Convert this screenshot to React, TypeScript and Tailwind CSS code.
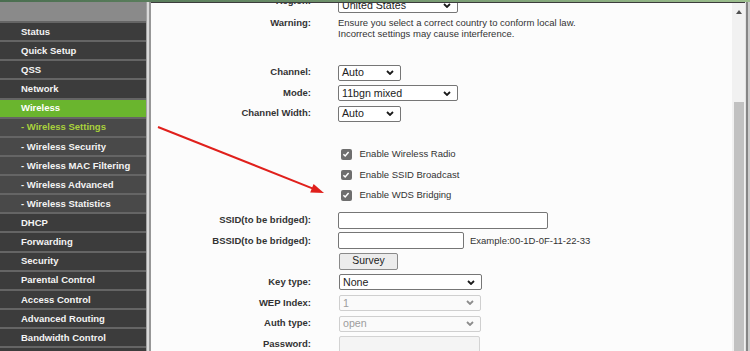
import React from "react";

const font = "font-['Liberation_Sans',Arial,Helvetica,sans-serif]";

function Chevron({ disabled }: { disabled?: boolean }) {
  return (
    <svg width="8" height="5" viewBox="0 0 8 5" className="shrink-0">
      <polyline
        points="1,1 4,4 7,1"
        fill="none"
        stroke={disabled ? "#8c8c8c" : "#1a1a1a"}
        strokeWidth="1.8"
      />
    </svg>
  );
}

function Select({
  value,
  className,
  disabled,
}: {
  value: string;
  className: string;
  disabled?: boolean;
}) {
  return (
    <div
      className={`flex items-center justify-between h-[16px] rounded-[2px] border pl-[3px] pr-[6px] text-[10.67px] leading-none ${
        disabled
          ? "border-[#cfcfcf] bg-[#fafafa] text-[#9d9d9d]"
          : "border-[#767676] bg-white text-[#222]"
      } ${className}`}
    >
      <span>{value}</span>
      <Chevron disabled={disabled} />
    </div>
  );
}

function Input({ className, disabled }: { className: string; disabled?: boolean }) {
  return (
    <div
      className={`h-[17px] rounded-[2px] border ${
        disabled ? "border-[#d3d3d3] bg-[#f4f4f4]" : "border-[#767676] bg-white"
      } ${className}`}
    />
  );
}

function Row({
  label,
  children,
  className = "",
  labelClass = "",
}: {
  label?: string;
  children?: React.ReactNode;
  className?: string;
  labelClass?: string;
}) {
  return (
    <div className={`flex items-center shrink-0 ${className}`}>
      <div className={`w-[160px] shrink-0 text-right font-bold text-[#333] ${labelClass}`}>
        {label}
      </div>
      <div className="ml-[27px] flex items-center">{children}</div>
    </div>
  );
}

function Check({ label }: { label: string }) {
  return (
    <Row className="h-[20.6px]">
      <div className="ml-[3px] flex items-center">
        <span className="flex h-[10.5px] w-[10.5px] items-center justify-center rounded-[2px] bg-[#6e6e6e]">
          <svg width="8" height="8" viewBox="0 0 8 8">
            <polyline
              points="1.4,4.2 3.2,6 6.6,2"
              fill="none"
              stroke="#ffffff"
              strokeWidth="1.5"
            />
          </svg>
        </span>
        <span className="ml-[8px] text-[#333]">{label}</span>
      </div>
    </Row>
  );
}

const nav: { t: string; sub?: boolean; active?: boolean; cur?: boolean }[] = [
  { t: "Status" },
  { t: "Quick Setup" },
  { t: "QSS" },
  { t: "Network" },
  { t: "Wireless", active: true },
  { t: "- Wireless Settings", sub: true, cur: true },
  { t: "- Wireless Security", sub: true },
  { t: "- Wireless MAC Filtering", sub: true },
  { t: "- Wireless Advanced", sub: true },
  { t: "- Wireless Statistics", sub: true },
  { t: "DHCP" },
  { t: "Forwarding" },
  { t: "Security" },
  { t: "Parental Control" },
  { t: "Access Control" },
  { t: "Advanced Routing" },
  { t: "Bandwidth Control" },
  { t: "" },
];

export default function App() {
  return (
    <div
      className={`${font} relative w-[750px] h-[351px] overflow-hidden bg-[#fcfcfc] flex flex-col text-[9.5px]`}
    >
      <div className="h-[2px] shrink-0 bg-gradient-to-r from-[#4a6e50] to-[#9cbf8e]" />
      <div className="flex flex-1 min-h-0">
        {/* Sidebar */}
        <div className="w-[146px] shrink-0 flex flex-col bg-[#3d3d3d] overflow-hidden">
          <div className="h-[19px] shrink-0 bg-[#8a8a8a]" />
          {nav.map((n, i) => (
            <div
              key={i}
              className={`h-[19.125px] shrink-0 border-t-2 border-[#656565] flex items-center pl-[21px] font-bold leading-none ${
                n.active ? "bg-[#6ab52e] text-white" : n.sub ? "bg-[#494949]" : "bg-[#3c3c3c]"
              } ${n.cur ? "text-[#a9d23c]" : "text-[#f4f4f4]"}`}
            >
              {n.t}
            </div>
          ))}
        </div>
        <div className="w-[5px] shrink-0 flex">
          <div className="w-[1px] bg-[#a3a3a3]" />
          <div className="w-[2px] bg-[#dadada]" />
          <div className="w-[2px] bg-[#979797]" />
        </div>

        {/* Content */}
        <div className="flex-1 flex border-t border-[#3c3c3c] min-w-0">
          <div className="flex-1 overflow-hidden flex flex-col leading-[10.4px]">
            <Row label="Region:" labelClass="mb-[9px]" className="h-[20.6px] -mt-[8px]">
              <Select value="United States" className="w-[120px]" />
            </Row>
            <div className="flex items-start mt-[2.5px] shrink-0">
              <div className="w-[160px] shrink-0 text-right font-bold text-[#333]">Warning:</div>
              <div className="ml-[27px] text-[#333]">
                <div>Ensure you select a correct country to conform local law.</div>
                <div>Incorrect settings may cause interference.</div>
              </div>
            </div>
            <Row label="Channel:" className="h-[20.6px] mt-[23.3px]">
              <Select value="Auto" className="w-[63px]" />
            </Row>
            <Row label="Mode:" className="h-[20.6px]">
              <Select value="11bgn mixed" className="w-[120px]" />
            </Row>
            <Row label="Channel Width:" className="h-[20.6px]">
              <Select value="Auto" className="w-[63px]" />
            </Row>
            <div className="h-[20px] shrink-0" />
            <Check label="Enable Wireless Radio" />
            <Check label="Enable SSID Broadcast" />
            <Check label="Enable WDS Bridging" />
            <Row label="SSID(to be bridged):" className="h-[20.7px] mt-[4px]">
              <Input className="w-[210px]" />
            </Row>
            <Row label="BSSID(to be bridged):" className="h-[20.7px]">
              <Input className="w-[126px]" />
              <span className="ml-[6px] text-[#333]">Example:00-1D-0F-11-22-33</span>
            </Row>
            <Row label="" className="h-[20.7px]">
              <div className="ml-[1px] flex h-[17.5px] w-[59px] items-center justify-center rounded-[2px] border border-[#8a8a8a] bg-[#ececec] text-[10.4px] text-[#222]">
                Survey
              </div>
            </Row>
            <Row label="Key type:" className="h-[20.7px]">
              <Select value="None" className="ml-[1px] w-[143px]" />
            </Row>
            <Row label="WEP Index:" className="h-[20.7px]">
              <Select value="1" className="ml-[1px] w-[142px]" disabled />
            </Row>
            <Row label="Auth type:" className="h-[20.7px]">
              <Select value="open" className="ml-[1px] w-[142px]" disabled />
            </Row>
            <Row label="Password:" className="h-[20.7px]">
              <Input className="ml-[1px] w-[141px]" disabled />
            </Row>
          </div>

          {/* Scrollbar */}
          <div className="w-[13px] shrink-0 bg-[#f1f1f1] flex flex-col">
            <div className="h-[18px] shrink-0 flex items-center justify-center">
              <div className="w-0 h-0 border-l-[3px] border-r-[3px] border-b-[4px] border-l-transparent border-r-transparent border-b-[#505050]" />
            </div>
            <div className="h-[81px] shrink-0" />
            <div className="flex-1 mx-[1.5px] bg-[#c1c1c1]" />
          </div>
        </div>
        <div className="w-[5px] shrink-0 flex">
          <div className="w-[1px] bg-[#e2e2e2]" />
          <div className="w-[2px] bg-[#858585]" />
          <div className="w-[2px] bg-[#cbcbcb]" />
        </div>
      </div>

      {/* Red arrow annotation */}
      <svg
        className="absolute left-0 top-0 pointer-events-none"
        width="750"
        height="351"
        viewBox="0 0 750 351"
      >
        <line x1="158" y1="127" x2="313" y2="188.6" stroke="#e0201c" strokeWidth="2" />
        <polygon points="324,193 310.2,192.4 313.6,184" fill="#e0201c" />
      </svg>
    </div>
  );
}
